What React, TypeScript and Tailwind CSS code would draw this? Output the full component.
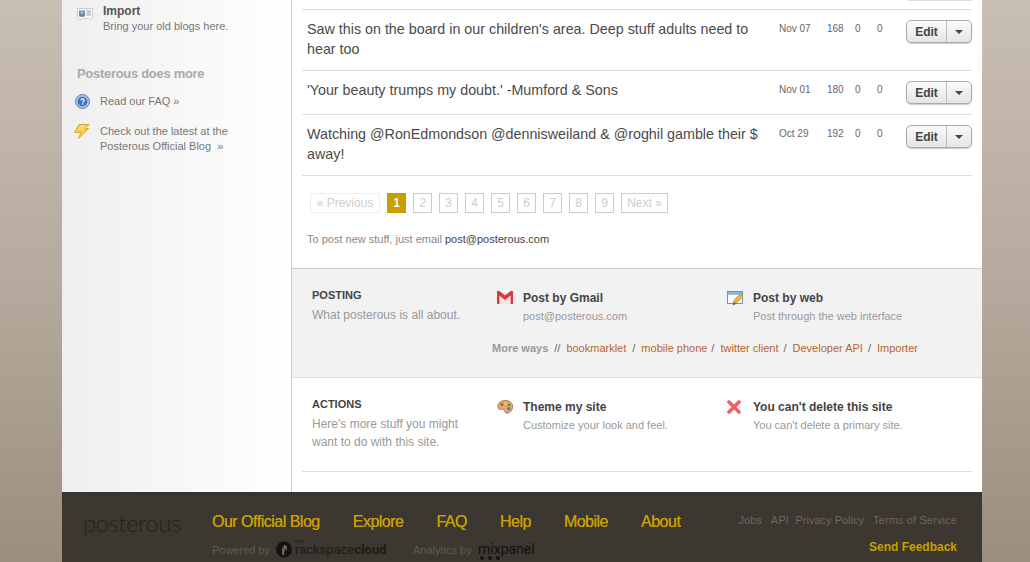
const rows = [
  { text: "Saw this on the board in our children's area. Deep stuff adults need to hear too", date: 'Nov 07', views: '168', h: 'h-[61px]' },
  { text: "'Your beauty trumps my doubt.' -Mumford & Sons", date: 'Nov 01', views: '180', h: 'h-[44px]' },
  { text: 'Watching @RonEdmondson @dennisweiland & @roghil gamble their $ away!', date: 'Oct 29', views: '192', h: 'h-[61px]' },
];

const pages = ['2', '3', '4', '5', '6', '7', '8', '9'];

function ImportIcon() {
  return (
    <svg width="16" height="12" viewBox="0 0 16 12" className="shrink-0">
      <path d="M.5.5h15v10l-1 1h-2l-1-1h-6l-1 1h-2l-2-1z" fill="#f7f9fb" stroke="#c9ced3" />
      <rect x="2" y="2.500" width="6" height="6" fill="#5b93c4" />
      <circle cx="5" cy="4.600" r="1.600" fill="#e8a45f" />
      <path d="M2.800 8.500c.3-2 4.100-2 4.400 0z" fill="#c8622e" />
      <path d="M9.500 3h4.500M9.500 5h4.500M9.500 7h4.500" stroke="#8ba3bd" />
    </svg>
  );
}

function FaqIcon() {
  return (
    <svg width="15" height="15" viewBox="0 0 15 15" className="shrink-0">
      <circle cx="7.500" cy="7.500" r="7" fill="#a9c1e2" stroke="#5f86bd" />
      <circle cx="7.500" cy="7.500" r="4.800" fill="#3f74bb" />
      <path d="M5.900 6.200c.2-1.700 3.300-1.700 3.300.1 0 1.100-1.300 1.100-1.400 2.200" fill="none" stroke="#fff" strokeWidth="1.200" />
      <rect x="7" y="9.300" width="1.300" height="1.300" fill="#fff" />
    </svg>
  );
}

function BoltIcon() {
  return (
    <svg width="16" height="15" viewBox="0 0 16 15" className="shrink-0">
      <path d="M5 .5h10L11 4.500h3.500L4.500 14.500l2.500-6H.5z" fill="#f5cf4e" stroke="#dca92a" strokeLinejoin="round" />
      <path d="M6 2.500h5M4.500 5h5" stroke="#fbe9a0" />
    </svg>
  );
}

function GmailIcon() {
  return (
    <svg width="16" height="13" viewBox="0 0 16 13" className="shrink-0">
      <rect x="1" y="1" width="14" height="12" fill="#f8e4e2" />
      <path d="M1.200 13V2l6.800 5.500L14.800 2v11" fill="none" stroke="#dc3a38" strokeWidth="2.400" />
      <path d="M0 0h2.500L8 4.500 13.500 0H16v2L8 8 0 2z" fill="#dc3a38" />
      <path d="M3.500 0h9L8 3.600z" fill="#fff" />
    </svg>
  );
}

function WebIcon() {
  return (
    <svg width="17" height="15" viewBox="0 0 17 15" className="shrink-0">
      <rect x=".5" y=".5" width="15" height="12" fill="#fbfcfe" stroke="#6d93c9" />
      <rect x="1" y="1" width="14" height="2.800" fill="#8db1de" />
      <path d="M6.500 11.500l1-3 5.500-5.500 3 2.500-6 6z" fill="#f0b440" stroke="#c98a23" strokeWidth=".7" />
      <path d="M5.500 14.500l1-3.500 3 1.800z" fill="#7a5a33" />
    </svg>
  );
}

function PaletteIcon() {
  return (
    <svg width="16" height="14" viewBox="0 0 16 14" className="shrink-0">
      <path d="M1 7C.5 3 4 .5 8.500.5 13 .5 16 3.500 15.500 7.500 15 11.500 11.500 13.500 9 13c-2-.5-.5-2.500-2-3.500C5 8.500 1.500 11 1 7z" fill="#e0a878" stroke="#b67b4d" />
      <circle cx="5" cy="4.500" r="1.500" fill="#e0483e" />
      <circle cx="8.500" cy="3.500" r="1.500" fill="#f1c93f" />
      <circle cx="12" cy="5" r="1.500" fill="#4f9c4b" />
      <circle cx="11.800" cy="8.800" r="1.500" fill="#4177b8" />
    </svg>
  );
}

function CrossIcon() {
  return (
    <svg width="14" height="14" viewBox="0 0 14 14" className="shrink-0">
      <path d="M2 2l10 10M12 2L2 12" stroke="#f0606c" strokeWidth="3.600" strokeLinecap="round" />
    </svg>
  );
}

function SplitButton() {
  return (
    <div className="flex h-[23px] w-[66px] shrink-0 rounded-[5px] border border-[#a9a9a9] bg-gradient-to-b from-[#fafafa] to-[#e4e6e6] shadow-[0_1px_1px_rgba(0,0,0,0.2)]">
      <div className="flex w-[40px] items-center justify-center border-r border-[#bbb] text-[12px] font-bold text-[#444]">Edit</div>
      <div className="flex flex-1 items-center justify-center">
        <div className="h-0 w-0 border-x-[4px] border-t-[4px] border-x-transparent border-t-[#444]" />
      </div>
    </div>
  );
}

function Feature({ icon, title, sub }: { icon: React.ReactNode; title: string; sub: string }) {
  return (
    <div className="flex">
      <div className="flex w-[26px] justify-start pt-[1px]">{icon}</div>
      <div>
        <div className="text-[12px] leading-[16px] font-bold text-[#444]">{title}</div>
        <div className="mt-[2px] text-[11px] leading-[16px] text-[#999]">{sub}</div>
      </div>
    </div>
  );
}

export default function App() {
  return (
    <div className="flex h-[562px] overflow-hidden bg-gradient-to-b from-[#c9beb2] via-[#b5aa9d] to-[#9b8e7f] pl-[62px] font-['Liberation_Sans',Arial,sans-serif]">
      <div className="flex w-[920px] flex-col">
        <div className="flex h-[492px] shrink-0 bg-white">
          <aside className="w-[230px] shrink-0 border-r border-[#ccc] bg-gradient-to-r from-[#efefef] to-white pt-[4px] pl-[13px]">
            <div className="flex">
              <div className="ml-[2px] flex w-[26px] pt-[4px]"><ImportIcon /></div>
              <div>
                <div className="text-[12px] leading-[15px] font-bold text-[#555]">Import</div>
                <div className="text-[11px] leading-[15px] text-[#777]">Bring your old blogs here.</div>
              </div>
            </div>
            <h3 className="mt-[32px] ml-[2px] text-[13px] leading-[16px] font-bold tracking-[-0.3px] text-[#aaa]">Posterous does more</h3>
            <div className="mt-[12px] flex text-[11px] leading-[15px] text-[#777]">
              <div className="w-[25px]"><FaqIcon /></div>
              <span>Read our FAQ »</span>
            </div>
            <div className="mt-[15px] flex text-[11px] leading-[15px] text-[#777]">
              <div className="-ml-[1px] w-[26px]"><BoltIcon /></div>
              <span>Check out the latest at the<br />Posterous Official Blog&nbsp; »</span>
            </div>
          </aside>

          <main className="flex-1">
            <div className="mx-[10px]">
              <div className="flex h-[10px] justify-end border-b border-[#ddd]">
                <div className="h-px w-[64px] bg-[#ddd]" />
              </div>
              {rows.map((r) => (
                <div key={r.date} className={`flex border-b border-[#ddd] pl-[5px] ${r.h}`}>
                  <div className="w-[472px] shrink-0 pt-[9px] pr-[14px] text-[14.3px] leading-[20px] text-[#4a4a4a]">{r.text}</div>
                  <div className="flex w-[127px] shrink-0 pt-[12px] text-[10px] leading-[13px] text-[#666]">
                    <span className="w-[48px]">{r.date}</span>
                    <span className="w-[28px]">{r.views}</span>
                    <span className="w-[22px]">0</span>
                    <span>0</span>
                  </div>
                  <div className="ml-auto pt-[10px]"><SplitButton /></div>
                </div>
              ))}
              <div className="mt-[17px] flex items-center pl-[8px] text-[12px] text-[#ccc]">
                <span className="mr-[7px] flex h-[20px] w-[70px] items-center justify-center border border-[#eee]">« Previous</span>
                <span className="mr-[7px] flex h-[20px] w-[19px] items-center justify-center bg-[#c99f00] font-bold text-white">1</span>
                {pages.map((p) => (
                  <span key={p} className="mr-[7px] flex h-[20px] w-[19px] items-center justify-center border border-[#ccc]">{p}</span>
                ))}
                <span className="flex h-[20px] w-[47px] items-center justify-center border border-[#ccc]">Next »</span>
              </div>
              <p className="mt-[19px] ml-[5px] text-[11px] leading-[14px] text-[#888]">
                To post new stuff, just email <span className="text-[#444]">post@posterous.com</span>
              </p>
            </div>

            <section className="mt-[22px] h-[110px] border-y border-t-[#ccc] border-b-[#ddd] bg-[#f2f2f2] pt-[19px] pl-[20px]">
              <div className="flex">
                <div className="w-[185px] shrink-0">
                  <h4 className="text-[11px] leading-[14px] font-bold text-[#444]">POSTING</h4>
                  <p className="mt-[4px] text-[12px] leading-[18px] text-[#999]">What posterous is all about.</p>
                </div>
                <div className="w-[230px] pt-[2px]"><Feature icon={<GmailIcon />} title="Post by Gmail" sub="post@posterous.com" /></div>
                <div className="pt-[2px]"><Feature icon={<WebIcon />} title="Post by web" sub="Post through the web interface" /></div>
              </div>
              <div className="mt-[17px] ml-[180px] flex gap-[5px] text-[11px] leading-[14px] whitespace-nowrap text-[#666]">
                <b className="text-[#999]">More ways</b>
                <span className="mx-[1px]">//</span>
                <span className="text-[#b5662b]">bookmarklet</span>
                <span className="mx-[1px]">/</span>
                <span className="w-[64px] text-[#b5662b]">mobile phone</span>
                <span className="mx-[1px]">/</span>
                <span className="text-[#b5662b]">twitter client</span>
                <span className="mr-[1px]">/</span>
                <span className="text-[#b5662b]">Developer API</span>
                <span>/</span>
                <span className="ml-[1px] text-[#b5662b]">Importer</span>
              </div>
            </section>

            <section className="pt-[19px]">
              <div className="mx-[10px] flex h-[75px] border-b border-[#ddd] pl-[10px]">
                <div className="w-[185px] shrink-0">
                  <h4 className="text-[11px] leading-[14px] font-bold text-[#444]">ACTIONS</h4>
                  <p className="mt-[4px] text-[12px] leading-[18px] text-[#999]">Here's more stuff you might<br />want to do with this site.</p>
                </div>
                <div className="w-[230px] pt-[2px]"><Feature icon={<PaletteIcon />} title="Theme my site" sub="Customize your look and feel." /></div>
                <div className="pt-[2px]"><Feature icon={<CrossIcon />} title="You can't delete this site" sub="You can't delete a primary site." /></div>
              </div>
            </section>
          </main>
        </div>

        <footer className="relative flex h-[70px] shrink-0 border-t-[3px] border-[#38332c] bg-[#3c3730] pt-[18px] pl-[21px]">
          <div className="w-[129px] shrink-0 font-['Lato',sans-serif] text-[24px] leading-[20px] font-light tracking-[-0.5px] text-[#26231a]">posterous</div>
          <div>
            <nav className="flex gap-[33px] text-[16px] leading-[18px] tracking-[-0.5px] text-[#c9a000] [text-shadow:0_0_0.5px_#c9a000]">
              <span>Our Official Blog</span>
              <span>Explore</span>
              <span>FAQ</span>
              <span>Help</span>
              <span>Mobile</span>
              <span>About</span>
            </nav>
            <div className="mt-[10px] flex items-center text-[11px] leading-[14px] text-[#5f5a51]">
              <span className="w-[64px]">Powered by</span>
              <svg width="16" height="17" viewBox="0 0 16 17" className="shrink-0">
                <circle cx="8" cy="8.500" r="8" fill="#15130f" />
                <path d="M6 14V8l2-4 3 1v5l-2-2-1 6z" fill="#6a655c" />
              </svg>
              <span className="relative ml-[3px] w-[118px] font-['Roboto',sans-serif] text-[13px] text-[#1e1b16]">
                <span className="absolute -top-[5px] left-0 text-[6px] leading-[6px]">the</span>
                rackspace<b>cloud</b>
              </span>
              <span className="w-[65px]">Analytics by</span>
              <div className="relative">
                <span className="font-['Roboto',sans-serif] text-[14px] text-[#15130f]">mixpanel</span>
                <div className="absolute top-[14px] left-[2px] flex gap-[4px]">
                  <i className="h-[4px] w-[4px] rounded-full bg-[#15130f]" />
                  <i className="h-[4px] w-[4px] rounded-full bg-[#15130f]" />
                  <i className="h-[4px] w-[4px] rounded-full bg-[#15130f]" />
                </div>
              </div>
            </div>
          </div>
          <div className="ml-auto pt-0 pr-[25px] text-right">
            <div className="flex justify-end gap-[9px] text-[11px] leading-[14px] text-[#6d675e]">
              <span>Jobs</span>
              <span>API</span>
              <span className="-ml-[2px]">Privacy Policy</span>
              <span className="tracking-[0.13px]">Terms of Service</span>
            </div>
            <div className="mt-[13px] text-[12px] leading-[14px] font-bold text-[#c9a000]">Send Feedback</div>
          </div>
        </footer>
      </div>
    </div>
  );
}
